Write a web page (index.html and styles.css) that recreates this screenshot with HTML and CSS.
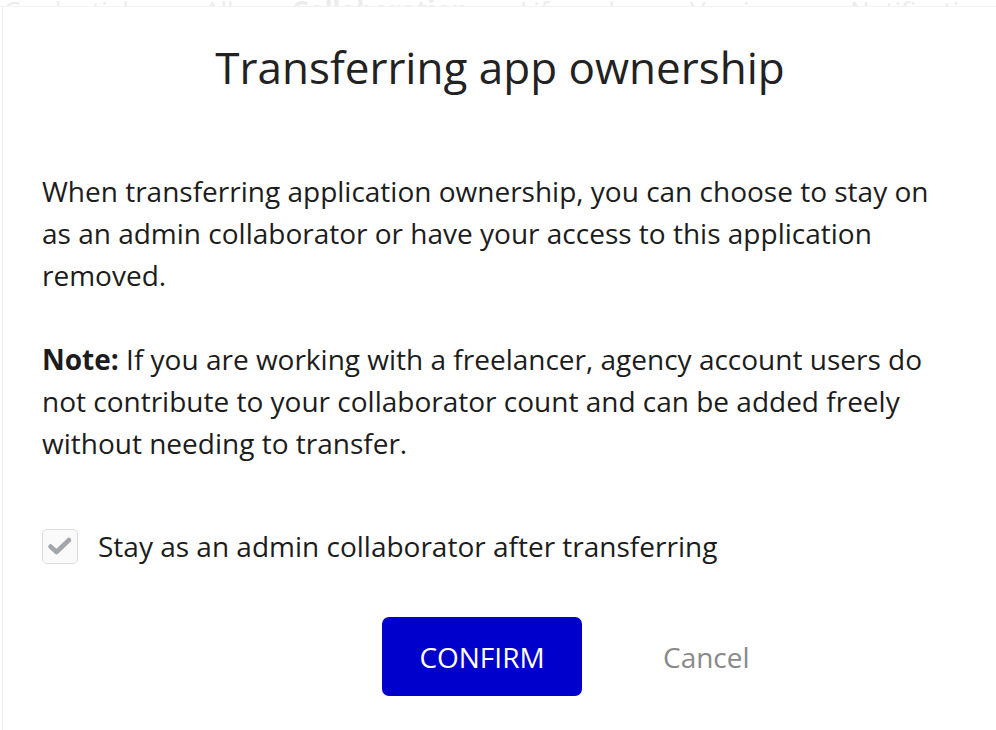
FILE: index.html
```html
<!DOCTYPE html>
<html lang="en">
<head>
<meta charset="utf-8">
<title>Transferring app ownership</title>
<link rel="stylesheet" href="styles.css">
</head>
<body>
<nav class="tabs">
  <span class="tab t1">Credentials</span>
  <span class="tab t2">All</span>
  <span class="tab t3">Collaboration</span>
  <span class="tab t4">Life cycle</span>
  <span class="tab t5">Versions</span>
  <span class="tab t6">Notifications</span>
</nav>
<div class="modal">
  <h1 class="title">Transferring app ownership</h1>
  <p class="text">When transferring application ownership, you can choose to stay on as an admin collaborator or have your access to this application removed.</p>
  <p class="text"><strong>Note:</strong> If you are working with a freelancer, agency account users do not contribute to your collaborator count and can be added freely without needing to transfer.</p>
  <label class="check">
    <span class="box"><svg width="26" height="22" viewBox="0 0 26 22"><path d="M3.5 11.5 L9.5 17 L22 5" fill="none" stroke="#a3a7ab" stroke-width="4.6" stroke-linecap="round" stroke-linejoin="round"/></svg></span>
    <span class="check-label">Stay as an admin collaborator after transferring</span>
  </label>
  <div class="actions">
    <button class="confirm">CONFIRM</button>
    <button class="cancel">Cancel</button>
  </div>
</div>
</body>
</html>
```
FILE: styles.css
```css
html, body {
  margin: 0;
  padding: 0;
  background: #fff;
  width: 996px;
  height: 730px;
  overflow: hidden;
  font-family: "Open Sans", "Noto Sans", sans-serif;
}
.tabs {
  position: relative;
  height: 6px;
  overflow: hidden;
  border-bottom: 1px solid #f0f0f0;
}
.tab {
  position: absolute;
  bottom: -22px;
  font-size: 26px;
  color: #ececec;
  white-space: nowrap;
}
.t1 { left: 4px; }
.t2 { left: 204px; }
.t3 { left: 292px; font-weight: 700; }
.t4 { left: 520px; }
.t5 { left: 690px; }
.t6 { left: 850px; }
.modal {
  position: absolute;
  top: 6px;
  left: 2px;
  width: 996px;
  height: 740px;
  background: #fff;
  border-left: 1px solid #ececec;
  border-top: 1px solid #f3f3f3;
  box-sizing: border-box;
  padding: 0 34px 0 39px;
}
.title {
  margin: 28px 0 0;
  font-size: 44px;
  font-weight: 400;
  line-height: 64px;
  text-align: center;
  color: #222;
  padding-right: 6px;
}
.text {
  margin: 71px 0 0;
  font-size: 28px;
  line-height: 42px;
  color: #1c1c1c;
}
.text + .text {
  margin-top: 42px;
}
.text strong {
  font-weight: 700;
}
.check {
  display: flex;
  align-items: center;
  gap: 20px;
  margin-top: 63px;
}
.box {
  width: 36px;
  height: 35px;
  border: 1.5px solid #dcdcdc;
  border-radius: 5px;
  box-sizing: border-box;
  display: flex;
  align-items: center;
  justify-content: center;
  background: #fafafa;
}
.check-label {
  font-size: 28px;
  color: #1c1c1c;
}
.actions {
  display: flex;
  align-items: center;
  margin-top: 52px;
  padding-left: 340px;
  gap: 81px;
}
.confirm {
  width: 200px;
  height: 79px;
  border: none;
  border-radius: 7px;
  background: #0000cd;
  color: #fff;
  font-family: inherit;
  font-size: 28px;
  padding: 0;
}
.cancel {
  border: none;
  background: none;
  color: #8a8a8a;
  font-family: inherit;
  font-size: 28px;
  padding: 0;
}
```
